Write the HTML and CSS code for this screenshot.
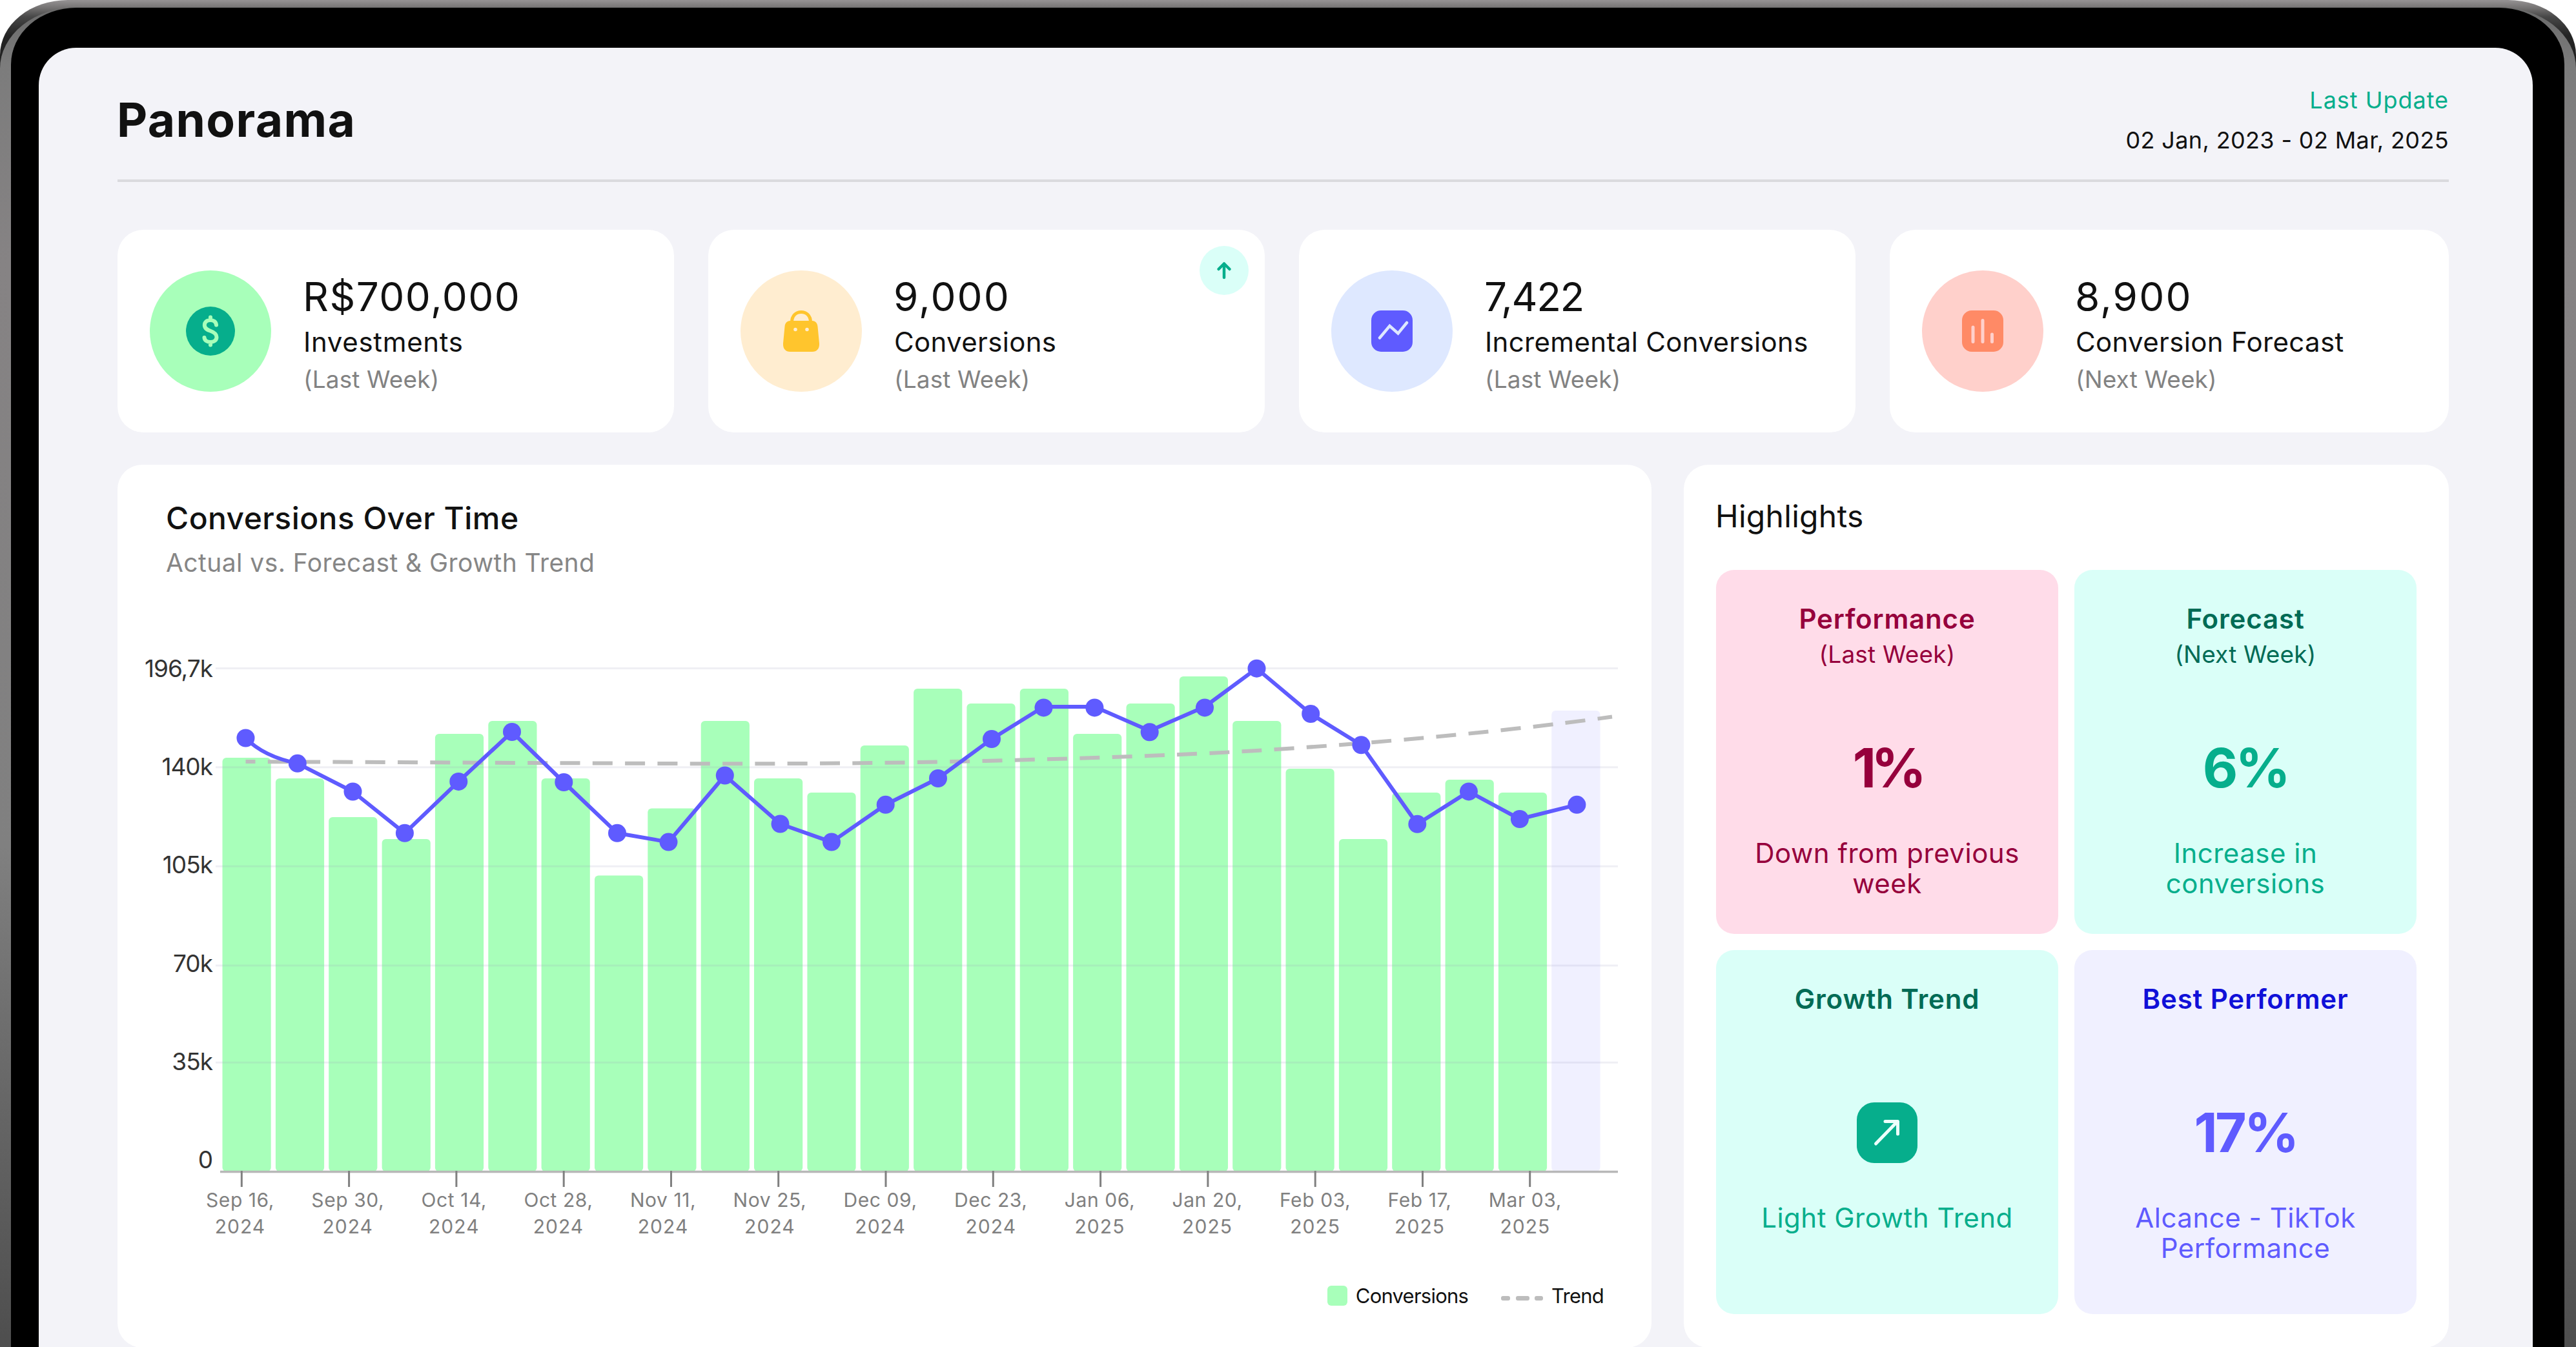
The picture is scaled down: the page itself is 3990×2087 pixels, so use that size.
FILE: index.html
```html
<!DOCTYPE html>
<html lang="en">
<head>
<meta charset="utf-8">
<title>Panorama</title>
<link rel="stylesheet" href="styles.css">
</head>
<body>
<div class="device">
<div class="rim">
<div class="bezel">
<main class="screen">

  <header class="header">
    <h1 class="header-title">Panorama</h1>
    <div class="header-meta">
      <div class="header-label">Last Update</div>
      <div class="header-date">02 Jan, 2023 - 02 Mar, 2025</div>
    </div>
  </header>

  <section class="stats">
    <article class="stat">
      <div class="stat-icon green">
        <svg width="76" height="76" viewBox="0 0 76 76" fill="none">
          <circle cx="38" cy="38" r="38" fill="#06ae8c"/>
          <path d="M38 16.500V21M38 55V59.500M47 28.500C46.500 23.500 43 21 38 21C32.500 21 28.800 24 28.800 28.800C28.800 34 33 36 38 37.800C43.500 39.800 47.500 42 47.500 47.200C47.500 52 43.500 55 38 55C32.500 55 28.800 52.300 28.500 48" stroke="#a8ffba" stroke-width="6" stroke-linecap="round"/>
        </svg>
      </div>
      <div class="stat-text">
        <div class="stat-value currency">R$700,000</div>
        <div class="stat-label wide">Investments</div>
        <div class="stat-period">(Last Week)</div>
      </div>
    </article>
    <article class="stat">
      <div class="stat-icon yellow">
        <svg width="58" height="64" viewBox="0 0 58 64" fill="none">
          <path d="M14.500 18C14.500 8 21 2.500 29 2.500C37 2.500 43.500 8 43.500 18" stroke="#ffc52d" stroke-width="5"/>
          <path d="M12 16H46C51 16 54 19.500 54.500 25L57 51C57.500 59 53.500 64 46 64H12C4.500 64 .5 59 1 51L3.500 25C4 19.500 7 16 12 16Z" fill="#ffc52d"/>
          <circle cx="20" cy="29.500" r="2.800" fill="#ffedd0"/>
          <circle cx="38" cy="29.500" r="2.800" fill="#ffedd0"/>
        </svg>
      </div>
      <div class="stat-text">
        <div class="stat-value">9,000</div>
        <div class="stat-label">Conversions</div>
        <div class="stat-period">(Last Week)</div>
      </div>
      <div class="stat-badge">
        <svg width="24" height="28" viewBox="0 0 24 28" fill="none" stroke="#06ae8c" stroke-width="4.500" stroke-linecap="round" stroke-linejoin="round">
          <path d="M12 25V3.500M3.500 12L12 3.500L20.500 12"/>
        </svg>
      </div>
    </article>
    <article class="stat">
      <div class="stat-icon blue">
        <svg width="64" height="64" viewBox="0 0 64 64" fill="none">
          <rect width="64" height="64" rx="15" fill="#5f5bff"/>
          <path d="M13 42.500L28.500 24L41.500 35.500L55 19" stroke="#dee8ff" stroke-width="4.500" stroke-linecap="round"/>
        </svg>
      </div>
      <div class="stat-text">
        <div class="stat-value tight">7,422</div>
        <div class="stat-label">Incremental Conversions</div>
        <div class="stat-period">(Last Week)</div>
      </div>
    </article>
    <article class="stat">
      <div class="stat-icon salmon">
        <svg width="64" height="64" viewBox="0 0 64 64" fill="none">
          <rect width="64" height="64" rx="15" fill="#ff8a66"/>
          <path d="M17 26V48.500M32 15.500V48.500M46.500 37V48.500" stroke="#ffd0cb" stroke-width="5" stroke-linecap="round"/>
        </svg>
      </div>
      <div class="stat-text">
        <div class="stat-value">8,900</div>
        <div class="stat-label">Conversion Forecast</div>
        <div class="stat-period">(Next Week)</div>
      </div>
    </article>
  </section>

  <section class="panels">
    <article class="panel chart-panel">
      <h2 class="chart-title">Conversions Over Time</h2>
      <p class="chart-subtitle">Actual vs. Forecast &amp; Growth Trend</p>

      <div class="chart">
        <div class="y-axis">
          <span>196,7k</span><span>140k</span><span>105k</span><span>70k</span><span>35k</span><span>0</span>
        </div>
        <svg class="plot" width="2172" height="824" viewBox="334 1015 2172 824" fill="none">
          <g fill="#a8ffba">
            <rect x="344.500" y="1174" width="75.200" height="641" rx="6"/>
            <rect x="426.900" y="1206" width="75.200" height="609" rx="6"/>
            <rect x="509.200" y="1266" width="75.200" height="549" rx="6"/>
            <rect x="591.600" y="1300" width="75.200" height="515" rx="6"/>
            <rect x="673.900" y="1137" width="75.200" height="678" rx="6"/>
            <rect x="756.300" y="1117" width="75.200" height="698" rx="6"/>
            <rect x="838.600" y="1206" width="75.200" height="609" rx="6"/>
            <rect x="921" y="1356.500" width="75.200" height="458.500" rx="6"/>
            <rect x="1003.300" y="1252.500" width="75.200" height="562.500" rx="6"/>
            <rect x="1085.700" y="1117" width="75.200" height="698" rx="6"/>
            <rect x="1168" y="1206" width="75.200" height="609" rx="6"/>
            <rect x="1250.400" y="1228" width="75.200" height="587" rx="6"/>
            <rect x="1332.700" y="1155" width="75.200" height="660" rx="6"/>
            <rect x="1415.100" y="1067" width="75.200" height="748" rx="6"/>
            <rect x="1497.400" y="1090" width="75.200" height="725" rx="6"/>
            <rect x="1579.800" y="1067" width="75.200" height="748" rx="6"/>
            <rect x="1662.100" y="1137" width="75.200" height="678" rx="6"/>
            <rect x="1744.500" y="1090" width="75.200" height="725" rx="6"/>
            <rect x="1826.800" y="1048" width="75.200" height="767" rx="6"/>
            <rect x="1909.200" y="1117" width="75.200" height="698" rx="6"/>
            <rect x="1991.500" y="1191" width="75.200" height="624" rx="6"/>
            <rect x="2073.900" y="1300" width="75.200" height="515" rx="6"/>
            <rect x="2156.200" y="1228" width="75.200" height="587" rx="6"/>
            <rect x="2238.600" y="1208" width="75.200" height="607" rx="6"/>
            <rect x="2320.900" y="1228" width="75.200" height="587" rx="6"/>
          </g>
          <rect x="2403.300" y="1101" width="75.200" height="714" rx="6" fill="#f0f0ff"/>
          <path d="M334 1035.500H2506M334 1188.700H2506M334 1342.300H2506M334 1496H2506M334 1646.300H2506" stroke="#a0a0be" stroke-opacity=".17" stroke-width="3"/>
          <path d="M341 1815.500H2506" stroke="#b8b8b8" stroke-width="3.500"/>
          <path d="M374.300 1814V1839M540.600 1814V1839M706.900 1814V1839M873.200 1814V1839M1039.500 1814V1839M1205.700 1814V1839M1372 1814V1839M1538.300 1814V1839M1704.600 1814V1839M1870.900 1814V1839M2037.200 1814V1839M2203.500 1814V1839M2369.700 1814V1839" stroke="#808080" stroke-width="3"/>
          <path d="M380.500 1180L1035 1183Q1220 1184 1403 1181.400C1650 1177 1850 1169 1942 1163.200C2080 1155 2240 1141 2344 1129.300Q2430 1120 2497 1110.500" stroke="#bdbdbd" stroke-width="6" stroke-dasharray="31 19.300" stroke-dashoffset="16"/>
          <path d="M380.500 1143.500Q408 1172 460.800 1182.800L546.500 1226.500L626.900 1290.800L710.300 1210.900L793 1134L873.300 1212L956 1290.800L1035.500 1304.600L1122.800 1201.500L1208.500 1276.500L1288 1304.600L1371.700 1246.800L1453 1206L1536 1145L1616.500 1095H1695.400L1780.700 1132.300L1866 1095L1946.500 1035.700L2030.200 1106L2108.400 1154.300L2195.300 1276.800L2275 1226.400L2353.900 1269L2442.400 1246.800" stroke="#5f5bff" stroke-width="6" stroke-linejoin="round"/>
          <g fill="#5f5bff">
            <circle cx="380.500" cy="1143.500" r="14"/><circle cx="460.800" cy="1182.800" r="14"/>
            <circle cx="546.500" cy="1226.500" r="14"/><circle cx="626.900" cy="1290.800" r="14"/>
            <circle cx="710.300" cy="1210.900" r="14"/><circle cx="793" cy="1134" r="14"/>
            <circle cx="873.300" cy="1212" r="14"/><circle cx="956" cy="1290.800" r="14"/>
            <circle cx="1035.500" cy="1304.600" r="14"/><circle cx="1122.800" cy="1201.500" r="14"/>
            <circle cx="1208.500" cy="1276.500" r="14"/><circle cx="1288" cy="1304.600" r="14"/>
            <circle cx="1371.700" cy="1246.800" r="14"/><circle cx="1453" cy="1206" r="14"/>
            <circle cx="1536" cy="1145" r="14"/><circle cx="1616.500" cy="1096.400" r="14"/>
            <circle cx="1695.400" cy="1096.400" r="14"/><circle cx="1780.700" cy="1134.300" r="14"/>
            <circle cx="1866" cy="1096.400" r="14"/><circle cx="1946.500" cy="1035.700" r="14"/>
            <circle cx="2030.200" cy="1106" r="14"/><circle cx="2108.400" cy="1154.300" r="14"/>
            <circle cx="2195.300" cy="1276.800" r="14"/><circle cx="2275" cy="1226.400" r="14"/>
            <circle cx="2353.900" cy="1269" r="14"/><circle cx="2442.400" cy="1246.800" r="14"/>
          </g>
        </svg>
      </div>

      <div class="x-axis">
        <div>Sep 16,<br><span>2024</span></div>
        <div>Sep 30,<br><span>2024</span></div>
        <div>Oct 14,<br><span>2024</span></div>
        <div>Oct 28,<br><span>2024</span></div>
        <div>Nov 11,<br><span>2024</span></div>
        <div>Nov 25,<br><span>2024</span></div>
        <div>Dec 09,<br><span>2024</span></div>
        <div>Dec 23,<br><span>2024</span></div>
        <div>Jan 06,<br><span>2025</span></div>
        <div>Jan 20,<br><span>2025</span></div>
        <div>Feb 03,<br><span>2025</span></div>
        <div>Feb 17,<br><span>2025</span></div>
        <div>Mar 03,<br><span>2025</span></div>
      </div>

      <div class="legend">
        <div class="legend-item"><i class="swatch"></i>Conversions</div>
        <div class="legend-item">
          <svg width="65" height="7" viewBox="0 0 65 7" fill="#bdbdbd">
            <rect width="14" height="7" rx="3"/><rect x="23" width="21" height="7" rx="3"/><rect x="52" width="13" height="7" rx="3"/>
          </svg>
          Trend
        </div>
      </div>
    </article>

    <article class="panel highlights">
      <h2 class="highlights-title">Highlights</h2>
      <div class="tiles">
        <div class="tile pink">
          <h3 class="tile-title">Performance</h3>
          <div class="tile-period">(Last Week)</div>
          <div class="tile-value squeezed">1%</div>
          <p class="tile-text">Down from previous week</p>
        </div>
        <div class="tile mint">
          <h3 class="tile-title">Forecast</h3>
          <div class="tile-period">(Next Week)</div>
          <div class="tile-value">6%</div>
          <p class="tile-text narrow">Increase in conversions</p>
        </div>
        <div class="tile mint no-period">
          <h3 class="tile-title">Growth Trend</h3>
          <div class="tile-value">
            <svg width="94" height="94" viewBox="0 0 94 94" fill="none">
              <rect width="94" height="94" rx="27" fill="#06ae8c"/>
              <path d="M29.500 64L62.500 30M44 29.500H63.500V49" stroke="#edfffb" stroke-width="5" stroke-linecap="round" stroke-linejoin="round"/>
            </svg>
          </div>
          <p class="tile-text">Light Growth Trend</p>
        </div>
        <div class="tile lilac no-period">
          <h3 class="tile-title">Best Performer</h3>
          <div class="tile-value">17%</div>
          <p class="tile-text">Alcance - TikTok Performance</p>
        </div>
      </div>
    </article>
  </section>

</main>
</div>
</div>
</div>
</body>
</html>
```
FILE: styles.css
```css
* { box-sizing: border-box; }

body {
  margin: 0;
  height: 2087px;
  overflow: hidden;
  background: #fff;
  color: #111;
  font-family: Inter, "Liberation Sans", sans-serif;
}

h1, h2, h3, p { margin: 0; font-weight: 400; }
svg { display: block; flex: none; }

/* Tablet frame */
.device {
  height: 2087px;
  padding-top: 11px;
  overflow: hidden;
  border-radius: 105px 105px 0 0 / 85px 85px 0 0;
  background: linear-gradient(#969394 0, #757373 12px, #484848 26px, #242424 55px, #202020 110px);
}
.rim {
  height: 2076px;
  padding: 1px 18px 0 17px;
  border-radius: 120px 120px 0 0 / 95px 95px 0 0;
  background: linear-gradient(#6a6a6a 0, #7c7c7c 90px, #868384 400px, #808080 1300px, #4e4e4e 2076px);
}
.bezel {
  height: 2075px;
  padding: 62px 49px 0 43px;
  border-radius: 101px 101px 0 0 / 88px 88px 0 0;
  background: #000;
}
.screen {
  height: 2013px;
  padding: 50px 130px 0 122px;
  border-radius: 58px 58px 0 0;
  background: #f3f3f8;
}

/* Header */
.header {
  display: flex;
  justify-content: space-between;
  align-items: center;
  height: 158px;
  padding-bottom: 30px;
  border-bottom: 4px solid #dadade;
}
.header-title {
  margin-left: -1px;
  font-size: 73px;
  font-weight: 650;
  line-height: 124px;
  letter-spacing: .019em;
}
.header-meta {
  font-size: 36px;
  line-height: 62px;
  text-align: right;
  letter-spacing: .01em;
}
.header-label { color: #06ae8c; letter-spacing: .027em; }

/* Stat cards */
.stats {
  display: grid;
  grid-template-columns: 862px 862px 862px 1fr;
  gap: 53px;
  margin-top: 74px;
}
.stat {
  position: relative;
  display: flex;
  align-items: flex-start;
  gap: 50px;
  height: 314px;
  padding: 63px 0 0 50px;
  border-radius: 40px;
  background: #fff;
}
.stat-icon {
  display: flex;
  align-items: center;
  justify-content: center;
  flex: none;
  width: 188px;
  height: 188px;
  border-radius: 50%;
}
.green { background: #a8ffba; }
.yellow { background: #ffedd0; }
.blue { background: #dee8ff; }
.salmon { background: #ffd0cb; }
.stat-text { padding-top: 3px; white-space: nowrap; }
.stat-value { margin-left: -1px; font-size: 62px; line-height: 76px; letter-spacing: .034em; }
.stat-value.currency { letter-spacing: .024em; }
.stat-value.tight { letter-spacing: -.022em; }
.stat-label { font-size: 42px; line-height: 63px; letter-spacing: .008em; }
.stat-label.wide { letter-spacing: .016em; }
.stat-period { font-size: 37px; line-height: 53px; letter-spacing: .004em; color: #828282; }
.stat-badge {
  position: absolute;
  top: 25px;
  right: 25px;
  display: flex;
  align-items: center;
  justify-content: center;
  width: 76px;
  height: 76px;
  border-radius: 50%;
  background: #dafff8;
}

/* Panels */
.panels {
  display: grid;
  grid-template-columns: 2376px 1fr;
  gap: 50px;
  margin-top: 50px;
}
.panel {
  height: 1368px;
  border-radius: 38px;
  background: #fff;
}

/* Chart */
.chart-panel { padding-top: 53px; }
.chart-title {
  padding-left: 75px;
  font-size: 48px;
  font-weight: 500;
  line-height: 60px;
  letter-spacing: .009em;
}
.chart-subtitle {
  margin-top: 11px;
  padding-left: 75px;
  font-size: 39px;
  line-height: 56px;
  letter-spacing: .011em;
  color: #868686;
}
.chart { display: flex; height: 879px; margin-top: 60px; }
.y-axis {
  display: flex;
  flex-direction: column;
  width: 152px;
  padding-right: 5px;
  font-size: 37px;
  line-height: 152.2px;
  letter-spacing: -.027em;
  text-align: right;
  color: #333;
}
.plot { margin-top: 55px; }
.x-axis {
  display: flex;
  justify-content: space-between;
  padding: 0 139px 0 137px;
  font-size: 30px;
  line-height: 41px;
  letter-spacing: .019em;
  text-align: center;
  white-space: nowrap;
  color: #808080;
}
.x-axis span { letter-spacing: .035em; }
.legend {
  display: flex;
  justify-content: flex-end;
  gap: 51px;
  margin-top: 71px;
  padding-right: 74px;
  font-size: 31px;
  line-height: 31px;
  letter-spacing: -.025em;
}
.legend-item { display: flex; align-items: center; gap: 13px; }
.legend-item svg { margin-top: 7px; }
.swatch { width: 31px; height: 31px; border-radius: 6px; background: #a8ffba; }

/* Highlights */
.highlights { padding: 50px 50px 0; }
.highlights-title {
  margin-left: -1px;
  font-size: 48px;
  line-height: 60px;
  letter-spacing: .006em;
}
.tiles {
  display: grid;
  grid-template-columns: 1fr 1fr;
  grid-auto-rows: 564px;
  gap: 25px;
  margin-top: 53px;
}
.tile {
  display: flex;
  flex-direction: column;
  align-items: center;
  padding: 48px 40px 0;
  border-radius: 28px;
  text-align: center;
}
.tile-title { font-size: 42px; font-weight: 600; line-height: 56px; letter-spacing: .02em; }
.tile-period { font-size: 37px; line-height: 54px; letter-spacing: .005em; }
.tile-value {
  display: flex;
  align-items: center;
  height: 100px;
  margin: 99px 0 58px;
  font-size: 84px;
  font-weight: 700;
  line-height: 100px;
  letter-spacing: -.045em;
}
.tile-value.squeezed { letter-spacing: -.09em; }
.no-period .tile-value { margin-top: 129px; }
.tile-text { font-size: 42px; line-height: 47px; letter-spacing: .012em; }
.tile-text.narrow { width: 300px; }
.pink { background: #ffdce9; color: #96003c; }
.mint { background: #dafff8; color: #06ae8c; }
.mint .tile-title, .mint .tile-period { color: #006b55; }
.lilac { background: #f0f0ff; color: #5f5bff; }
.lilac .tile-title { color: #1010d8; }
```
